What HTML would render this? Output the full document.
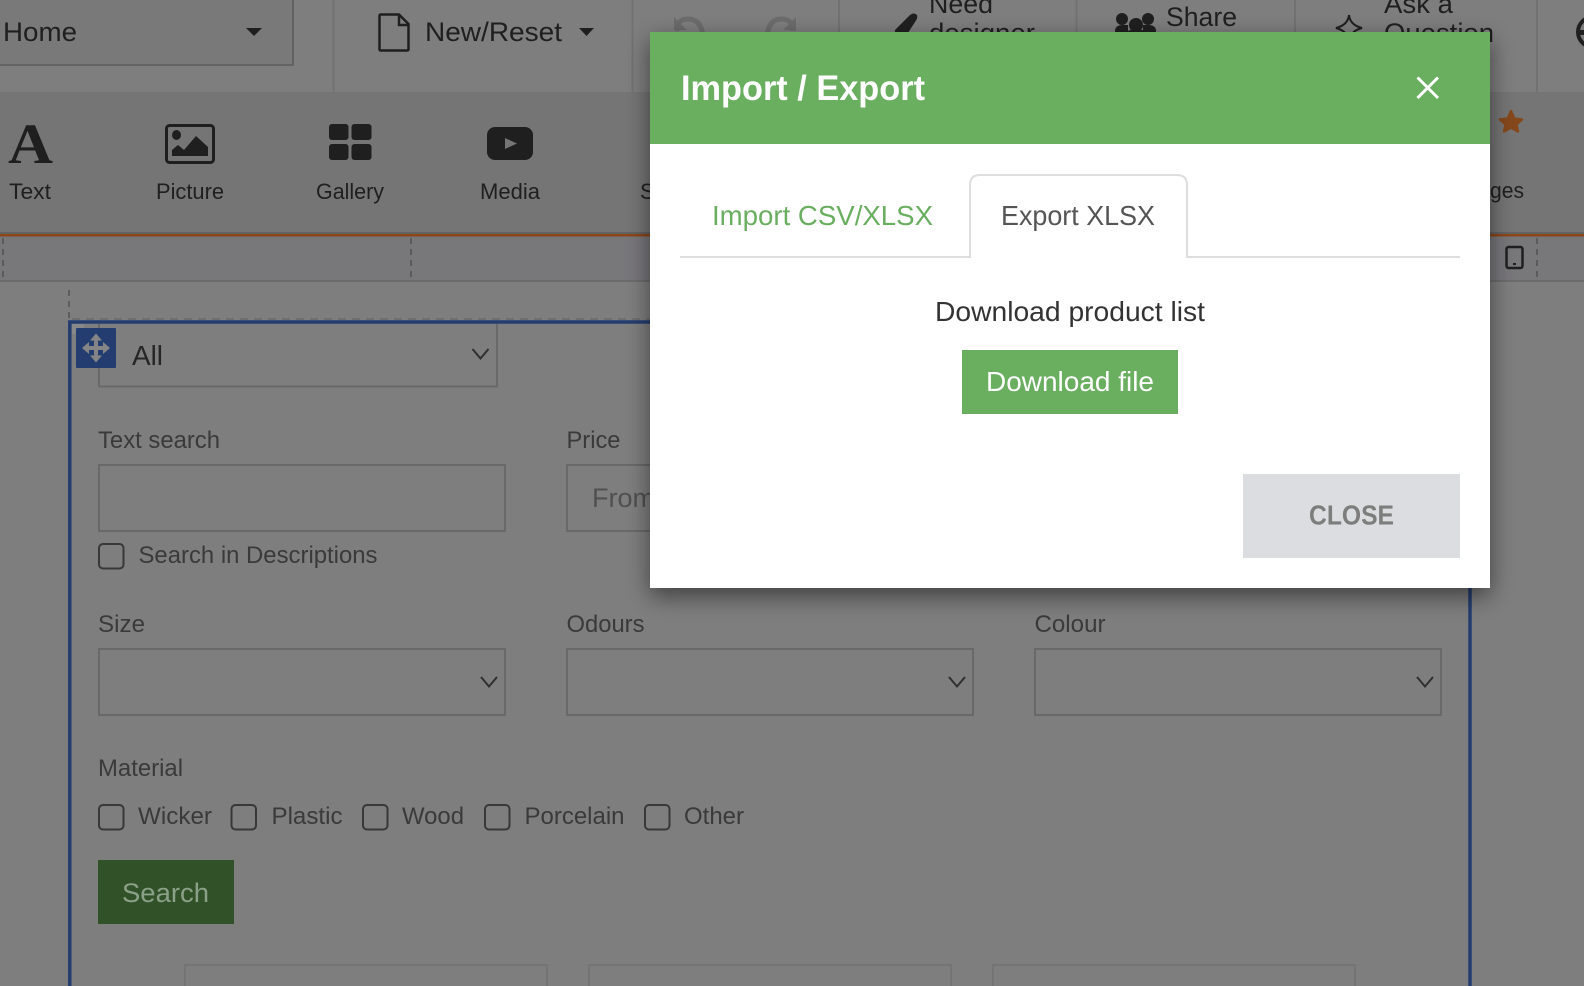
<!DOCTYPE html>
<html><head><meta charset="utf-8"><title>Import / Export</title>
<style>
html,body{margin:0;padding:0;width:1584px;height:986px;overflow:hidden;background:#7e7e7e}
svg{display:block;position:absolute;left:0;top:0}
text{font-family:"Liberation Sans",sans-serif}
</style></head><body>
<svg width="1584" height="986" viewBox="0 0 1584 986" xmlns="http://www.w3.org/2000/svg">
<defs>
<filter id="sh" x="-10%" y="-15%" width="120%" height="135%"><feDropShadow dx="0" dy="8" stdDeviation="12" flood-color="#000" flood-opacity=".5"/></filter>
</defs>
<rect width="1584" height="986" fill="#7e7e7e"/>
<!-- top bar -->
<rect x="-4" y="-4" width="297" height="69" fill="#797979" stroke="#636363" stroke-width="2"/>
<g stroke="#727272" stroke-width="2"><path d="M333.500 0V92M632.500 0V92M839 0V92M1076.500 0V92M1295 0V92M1537 0V92"/></g>
<g fill="#1f1f1f">
<text x="3" y="41" font-size="27" textLength="74" lengthAdjust="spacingAndGlyphs">Home</text>
<path d="M246 28H262L254 36Z"/>
<path d="M379.500 16Q379.500 14.500 381 14.500H399L408.500 24V49Q408.500 50.500 407 50.500H381Q379.500 50.500 379.500 49Z" fill="none" stroke="#1f1f1f" stroke-width="2.500" stroke-linejoin="round"/>
<path d="M399 14V25H409" fill="none" stroke="#1f1f1f" stroke-width="2.500"/>
<text x="425" y="41" font-size="27" textLength="137" lengthAdjust="spacingAndGlyphs">New/Reset</text>
<path d="M579 28H594L586.500 36Z"/>
<text x="929" y="13" font-size="27" textLength="64" lengthAdjust="spacingAndGlyphs">Need</text>
<text x="929" y="42" font-size="27" textLength="106" lengthAdjust="spacingAndGlyphs">designer</text>
<path d="M895 36V30L910 15Q914 12 917 15Q918 18 915 22L906 36Z"/>
<circle cx="1122" cy="19" r="6"/><circle cx="1136" cy="25" r="7"/><circle cx="1148" cy="19" r="6"/>
<path d="M1115 36V30Q1116 25 1122 25H1128V36ZM1124 36Q1124 30 1136 29Q1148 30 1148 36ZM1143 36V25H1149Q1155 25 1156 30V36Z"/>
<text x="1166" y="26" font-size="27" textLength="71" lengthAdjust="spacingAndGlyphs">Share</text>
<path d="M1349 15Q1350 25 1362 28Q1350 31 1349 42Q1348 31 1336 28Q1348 25 1349 15Z" fill="none" stroke="#1f1f1f" stroke-width="2"/>
<text x="1384" y="13" font-size="27" textLength="69" lengthAdjust="spacingAndGlyphs">Ask a</text>
<text x="1384" y="42" font-size="27" textLength="110" lengthAdjust="spacingAndGlyphs">Question</text>
</g>
<g fill="none" stroke="#6c6c6c" stroke-width="5">
<path d="M678 31Q676 19 688 19Q701 19 703 36"/><path d="M793 31Q793 19 781 19Q769 19 767 36"/>
</g>
<path d="M674 17V30H687ZM796 17V30H783Z" fill="#6c6c6c"/>
<circle cx="1593" cy="32" r="15" fill="none" stroke="#1f1f1f" stroke-width="4"/>
<path d="M1577 30H1584V35H1577Z" fill="#1f1f1f"/>
<!-- toolbar -->
<rect y="92" width="1584" height="140" fill="#757575"/>
<rect y="232" width="1584" height="2" fill="#636363"/>
<rect y="234" width="1584" height="2.500" fill="#8c4619"/>
<text x="8" y="163" font-size="57" font-weight="700" fill="#1f1f1f" style='font-family:"Liberation Serif",serif' textLength="45" lengthAdjust="spacingAndGlyphs">A</text>
<g fill="#1f1f1f">
<rect x="166.500" y="125.500" width="47" height="37" rx="3" fill="none" stroke="#1f1f1f" stroke-width="3"/>
<ellipse cx="176.500" cy="135" rx="4.500" ry="5"/>
<path d="M172 156V150L178 145L184 150L196 136L208 147V156Z"/>
<rect x="329" y="124" width="19.500" height="16" rx="3"/><rect x="351.500" y="124" width="20" height="16" rx="3"/>
<rect x="329" y="144" width="19.500" height="16" rx="3"/><rect x="351.500" y="144" width="20" height="16" rx="3"/>
<rect x="487" y="127" width="46" height="33" rx="8"/>
<path d="M505 138L517 143.500L505 149Z" fill="#757575"/>
<text x="9" y="199" font-size="22" textLength="42" lengthAdjust="spacingAndGlyphs">Text</text>
<text x="156" y="199" font-size="22" textLength="68" lengthAdjust="spacingAndGlyphs">Picture</text>
<text x="316" y="199" font-size="22" textLength="68" lengthAdjust="spacingAndGlyphs">Gallery</text>
<text x="480" y="199" font-size="22" textLength="60" lengthAdjust="spacingAndGlyphs">Media</text>
<text x="640" y="199" font-size="22">S</text>
<text x="1490" y="198" font-size="22" textLength="34" lengthAdjust="spacingAndGlyphs">ges</text>
</g>
<path d="M1511 111L1514.200 118.500L1522 119.500L1516.500 124.500L1518 131.500L1511 127.500L1504 131.500L1505.500 124.500L1500 119.500L1507.800 118.500Z" fill="#85481b" stroke="#85481b" stroke-width="2.500" stroke-linejoin="round"/>
<!-- strip -->
<rect y="236.500" width="1584" height="43.500" fill="#78777a"/>
<rect y="280" width="1584" height="2" fill="#6c6c6c"/>
<g stroke="#525252" stroke-width="1.500" stroke-dasharray="6 5" fill="none">
<path d="M3 238V280M411 238V280M1537 238V280M69 290V318"/>
</g>
<rect x="1506.500" y="247" width="16" height="21" rx="2" fill="none" stroke="#1f1f1f" stroke-width="2.500"/>
<rect x="1513" y="263" width="3" height="2" fill="#1f1f1f"/>
<!-- block -->
<rect x="99" y="322" width="398" height="64.500" fill="none" stroke="#696969" stroke-width="2"/>
<path d="M72 319H1470" stroke="#6f6f6f" stroke-width="2" stroke-dasharray="8 6"/>
<path d="M69.800 986V322H1470V986" fill="none" stroke="#243d70" stroke-width="3.500"/>
<rect x="72" y="324" width="12" height="10" fill="#888"/>
<rect x="76" y="328" width="40" height="40" rx="1" fill="#243d70"/>
<g fill="#858585">
<path d="M96 333.500L102 340.500H90ZM96 362.500L102 355.500H90ZM82 348L89 342V354ZM110 348L103 342V354Z"/>
<rect x="94" y="338" width="4" height="20"/><rect x="86" y="346" width="20" height="4"/>
</g>
<text x="132" y="365" font-size="28" fill="#262626" textLength="31" lengthAdjust="spacingAndGlyphs">All</text>
<g fill="none" stroke="#2f2f2f" stroke-width="2">
<path d="M472.500 349L480.500 358.500L488.500 349M481 677L489 686.500L497 677M949 677L957 686.500L965 677M1417 677L1425 686.500L1433 677"/>
</g>
<g fill="#3a3a3a" font-size="24">
<text x="98" y="448" textLength="122" lengthAdjust="spacingAndGlyphs">Text search</text>
<text x="566.500" y="448" textLength="54" lengthAdjust="spacingAndGlyphs">Price</text>
<text x="138.500" y="563" textLength="239" lengthAdjust="spacingAndGlyphs">Search in Descriptions</text>
<text x="98" y="632" textLength="47" lengthAdjust="spacingAndGlyphs">Size</text>
<text x="566.500" y="632" textLength="78" lengthAdjust="spacingAndGlyphs">Odours</text>
<text x="1034.500" y="632" textLength="71" lengthAdjust="spacingAndGlyphs">Colour</text>
<text x="98" y="776" textLength="85" lengthAdjust="spacingAndGlyphs">Material</text>
<text x="138" y="824" textLength="74" lengthAdjust="spacingAndGlyphs">Wicker</text>
<text x="271.500" y="824" textLength="71" lengthAdjust="spacingAndGlyphs">Plastic</text>
<text x="402" y="824" textLength="62" lengthAdjust="spacingAndGlyphs">Wood</text>
<text x="524.500" y="824" textLength="100" lengthAdjust="spacingAndGlyphs">Porcelain</text>
<text x="684" y="824" textLength="60" lengthAdjust="spacingAndGlyphs">Other</text>
</g>
<text x="592" y="507" font-size="27" fill="#505050">From</text>
<g fill="none" stroke="#696969" stroke-width="2">
<rect x="99" y="465" width="406" height="66"/>
<rect x="567" y="465" width="407" height="66"/>
<rect x="99" y="649" width="406" height="66"/>
<rect x="567" y="649" width="406" height="66"/>
<rect x="1035" y="649" width="406" height="66"/>
</g>
<g fill="none" stroke="#383838" stroke-width="2">
<rect x="99" y="544" width="24.500" height="24.500" rx="4"/>
<rect x="99" y="805" width="24.500" height="24.500" rx="4"/>
<rect x="231.500" y="805" width="24.500" height="24.500" rx="4"/>
<rect x="363" y="805" width="24.500" height="24.500" rx="4"/>
<rect x="485" y="805" width="24.500" height="24.500" rx="4"/>
<rect x="645" y="805" width="24.500" height="24.500" rx="4"/>
</g>
<rect x="98" y="860" width="136" height="64" fill="#315229"/>
<text x="122" y="902" font-size="27" fill="#8aa087" textLength="87" lengthAdjust="spacingAndGlyphs">Search</text>
<g fill="none" stroke="#747474" stroke-width="2">
<rect x="185" y="965" width="362" height="40"/>
<rect x="589" y="965" width="362" height="40"/>
<rect x="993" y="965" width="362" height="40"/>
</g>
<!-- modal -->
<rect x="650" y="32" width="840" height="556" fill="#fff" filter="url(#sh)"/>
<rect x="650" y="32" width="840" height="112" fill="#6aae60"/>
<text x="681" y="100" font-size="35" font-weight="700" fill="#fff" textLength="244" lengthAdjust="spacingAndGlyphs">Import / Export</text>
<path d="M1417.500 77.500L1438 98M1438 77.500L1417.500 98" stroke="#fff" stroke-width="3" fill="none"/>
<path d="M680 257H970V185Q970 175 980 175H1177Q1187 175 1187 185V257H1460" fill="none" stroke="#dedede" stroke-width="2"/>
<text x="712" y="225" font-size="28" fill="#6aae60" textLength="221" lengthAdjust="spacingAndGlyphs">Import CSV/XLSX</text>
<text x="1001" y="225" font-size="28" fill="#555" textLength="154" lengthAdjust="spacingAndGlyphs">Export XLSX</text>
<text x="935" y="321" font-size="28" fill="#333" textLength="270" lengthAdjust="spacingAndGlyphs">Download product list</text>
<rect x="962" y="350" width="216" height="64" fill="#6aae60"/>
<text x="986" y="391" font-size="28" fill="#fff" textLength="168" lengthAdjust="spacingAndGlyphs">Download file</text>
<rect x="1243" y="474" width="217" height="84" fill="#dcdde0"/>
<text x="1309" y="524.500" font-size="28" font-weight="700" fill="#7d7d7d" textLength="85" lengthAdjust="spacingAndGlyphs">CLOSE</text>
</svg>
</body></html>
